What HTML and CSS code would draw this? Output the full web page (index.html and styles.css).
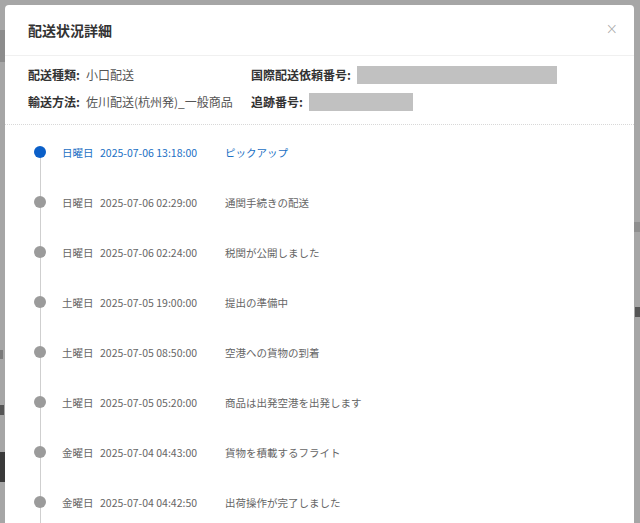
FILE: index.html
```html
<!DOCTYPE html>
<html lang="ja">
<head>
<meta charset="utf-8">
<title>配送状況詳細</title>
<link rel="stylesheet" href="styles.css">
</head>
<body>
<div class="backdrop">
  <div class="bg-img bg-img-1"></div>
  <div class="bg-img bg-img-2"></div>
  <div class="bg-img bg-img-3"></div>
  <div class="bg-img bg-mark-1"></div>
  <div class="bg-img bg-mark-2"></div>
  <div class="bg-img bg-mark-3"></div>
</div>
<div class="modal">
  <div class="modal-header">
    <h1 class="modal-title">配送状況詳細</h1>
    <span class="modal-close">×</span>
  </div>
  <div class="info">
    <div class="info-row">
      <div class="info-cell info-cell-left"><span class="info-label">配送種類:</span><span class="info-value">小口配送</span></div>
      <div class="info-cell"><span class="info-label">国際配送依頼番号:</span><span class="mask mask-long"></span></div>
    </div>
    <div class="info-row">
      <div class="info-cell info-cell-left"><span class="info-label">輸送方法:</span><span class="info-value">佐川配送(杭州発)_一般商品</span></div>
      <div class="info-cell"><span class="info-label">追跡番号:</span><span class="mask mask-short"></span></div>
    </div>
  </div>
  <ul class="timeline">
    <li class="tl-item tl-active"><span class="tl-dot"></span><span class="tl-day">日曜日</span><span class="tl-date">2025-07-06 13:18:00</span><span class="tl-desc">ピックアップ</span></li>
    <li class="tl-item"><span class="tl-dot"></span><span class="tl-day">日曜日</span><span class="tl-date">2025-07-06 02:29:00</span><span class="tl-desc">通関手続きの配送</span></li>
    <li class="tl-item"><span class="tl-dot"></span><span class="tl-day">日曜日</span><span class="tl-date">2025-07-06 02:24:00</span><span class="tl-desc">税関が公開しました</span></li>
    <li class="tl-item"><span class="tl-dot"></span><span class="tl-day">土曜日</span><span class="tl-date">2025-07-05 19:00:00</span><span class="tl-desc">提出の準備中</span></li>
    <li class="tl-item"><span class="tl-dot"></span><span class="tl-day">土曜日</span><span class="tl-date">2025-07-05 08:50:00</span><span class="tl-desc">空港への貨物の到着</span></li>
    <li class="tl-item"><span class="tl-dot"></span><span class="tl-day">土曜日</span><span class="tl-date">2025-07-05 05:20:00</span><span class="tl-desc">商品は出発空港を出発します</span></li>
    <li class="tl-item"><span class="tl-dot"></span><span class="tl-day">金曜日</span><span class="tl-date">2025-07-04 04:43:00</span><span class="tl-desc">貨物を積載するフライト</span></li>
    <li class="tl-item"><span class="tl-dot"></span><span class="tl-day">金曜日</span><span class="tl-date">2025-07-04 04:42:50</span><span class="tl-desc">出荷操作が完了しました</span></li>
  </ul>
</div>
</body>
</html>
```
FILE: styles.css
```css
html, body {
  margin: 0;
  padding: 0;
  height: 100%;
  overflow: hidden;
}
body {
  background: #a6a6a6;
  font-family: "Noto Sans CJK JP", "Noto Sans", sans-serif;
  position: relative;
}
.backdrop {
  position: absolute;
  inset: 0;
}
.bg-img {
  position: absolute;
  background: #7d7d7d;
}
.bg-img-1 { left: 0; top: 30px; width: 5px; height: 32px; background: #8c8c8c; }
.bg-img-2 { left: 0; top: 452px; width: 5px; height: 30px; background: #3a3a3a; }
.bg-img-3 { left: 634px; top: 222px; width: 6px; height: 10px; background: #8f8f8f; }
.bg-mark-1 { left: 0; top: 350px; width: 3px; height: 9px; background: #7a7a7a; }
.bg-mark-2 { left: 0; top: 405px; width: 4px; height: 10px; background: #555; }
.bg-mark-3 { left: 635px; top: 307px; width: 5px; height: 10px; background: #555; }
.modal {
  position: relative;
  margin: 5px 0 0 5px;
  width: 629px;
  height: 600px;
  background: #fff;
  border-radius: 4px 4px 0 0;
}
.modal-header {
  height: 50px;
  border-bottom: 1px solid #f0f0f0;
  display: flex;
  align-items: center;
  justify-content: space-between;
  padding: 0 16px 0 23px;
}
.modal-title {
  margin: 0;
  font-size: 14px;
  font-weight: 700;
  color: #333;
}
.modal-close {
  font-family: "DejaVu Sans", sans-serif;
  font-size: 15px;
  color: #aaa;
  font-weight: 300;
  margin-top: -2px;
}
.info {
  padding: 5px 23px 9px 23px;
  border-bottom: 1px dotted #d8d8d8;
}
.info-row {
  height: 27px;
  display: flex;
  align-items: center;
}
.info-cell {
  display: flex;
  align-items: center;
  font-size: 12px;
}
.info-cell-left {
  width: 223px;
}
.info-label {
  font-weight: 700;
  color: #333;
  margin-right: 6px;
}
.info-value {
  color: #555;
}
.mask {
  display: inline-block;
  height: 18px;
  background: #c1c1c1;
}
.mask-long { width: 200px; }
.mask-short { width: 104px; }
.timeline {
  list-style: none;
  margin: 0;
  padding: 2px 0 0 29px;
  background: linear-gradient(#cfcfcf, #cfcfcf) no-repeat 34.5px 27px / 1px 100%;
}
.tl-item {
  height: 50px;
  display: flex;
  align-items: center;
  font-size: 10.5px;
  color: #666;
}
.tl-dot {
  width: 12px;
  height: 12px;
  border-radius: 50%;
  background: #9b9b9b;
  margin-right: 16px;
  flex: none;
}
.tl-active {
  color: #1a6fc4;
}
.tl-active .tl-dot {
  background: #0b5fc8;
}
.tl-day {
  width: 38px;
}
.tl-date {
  width: 125px;
}
.tl-desc {
  white-space: nowrap;
}
```
